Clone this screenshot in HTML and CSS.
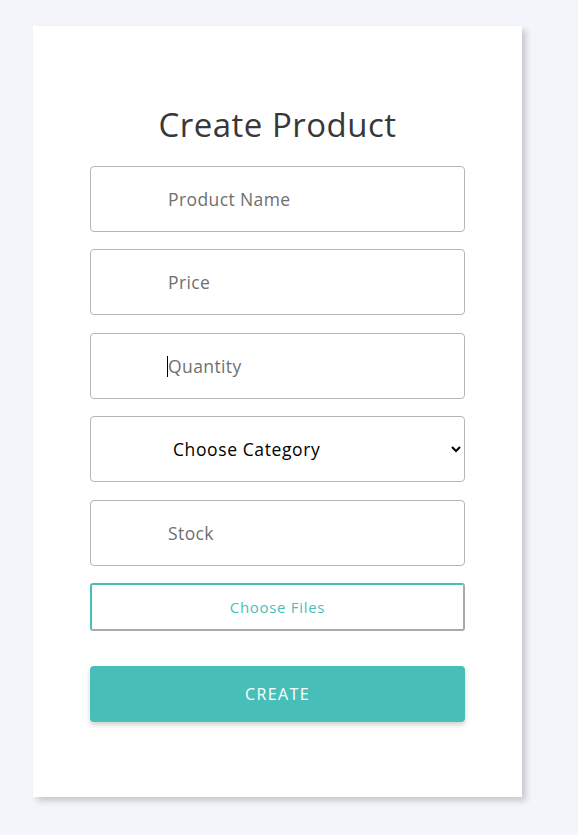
FILE: index.html
```html
<!DOCTYPE html>
<html lang="en">
<head>
<meta charset="utf-8">
<title>Create Product</title>
<link rel="stylesheet" href="styles.css">
</head>
<body>
<div class="page">
  <form class="card">
    <h1 class="title">Create Product</h1>
    <div class="field"><input class="input" type="text" placeholder="Product Name"></div>
    <div class="field"><input class="input" type="text" placeholder="Price"></div>
    <div class="field"><input class="input" type="text" placeholder="Quantity"><span class="caret"></span></div>
    <div class="field">
      <select class="select">
        <option>Choose Category</option>
      </select>
    </div>
    <div class="field"><input class="input" type="text" placeholder="Stock"></div>
    <div class="file">Choose Files</div>
    <button class="submit" type="button">CREATE</button>
  </form>
</div>
</body>
</html>
```
FILE: styles.css
```css
* { box-sizing: border-box; }
html, body { margin: 0; padding: 0; }
body {
  background: #f4f5fa;
  font-family: "Open Sans", "Noto Sans", sans-serif;
  width: 578px;
  height: 835px;
  overflow: hidden;
}
.page {
  padding: 26px 0 0 33px;
}
.card {
  width: 489px;
  height: 771px;
  background: #fff;
  box-shadow: 4px 4px 6px rgba(0, 0, 0, 0.18);
  display: flex;
  flex-direction: column;
  align-items: center;
  padding-top: 80px;
}
.title {
  margin: 0 0 22px;
  font-weight: 400;
  font-size: 33px;
  line-height: 38px;
  color: #383838;
  letter-spacing: 0.5px;
}
.field {
  position: relative;
  width: 375px;
  height: 66px;
  margin-bottom: 17.4px;
  flex-shrink: 0;
}
.input, .select {
  width: 100%;
  height: 100%;
  border: 1px solid #b5b5b5;
  border-radius: 4px;
  background: #fff;
  font-family: inherit;
  font-size: 17.5px;
  letter-spacing: 0.4px;
  outline: none;
}
.input {
  padding: 0 0 0 77px;
  color: #333;
}
.input::placeholder { color: #6f6f6f; }
.select {
  padding: 0 6px 0 78px;
  color: #000;
  letter-spacing: 0.6px;
}
.caret {
  position: absolute;
  left: 77px;
  top: 23px;
  width: 1px;
  height: 21px;
  background: #000;
}
.file {
  width: 375px;
  height: 48px;
  flex-shrink: 0;
  border: 2px solid #47bfb8;
  border-bottom-color: #a9a9a9;
  border-right-color: #a9a9a9;
  border-radius: 3px;
  display: flex;
  align-items: center;
  justify-content: center;
  color: #47bfb8;
  font-size: 15px;
  letter-spacing: 0.7px;
}
.submit {
  margin-top: 35px;
  width: 375px;
  height: 56px;
  flex-shrink: 0;
  border: none;
  border-radius: 4px;
  background: #47bfb8;
  color: #fff;
  font-family: inherit;
  font-size: 16px;
  letter-spacing: 1.4px;
  box-shadow: 0 3px 5px rgba(0, 0, 0, 0.18);
}
```
